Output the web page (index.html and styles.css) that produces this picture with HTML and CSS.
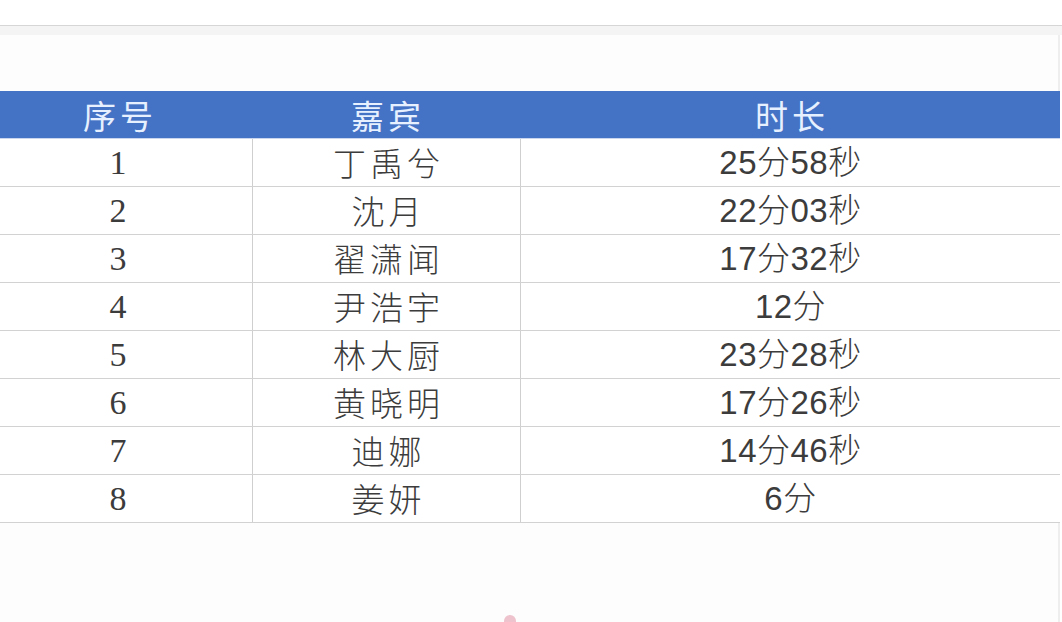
FILE: index.html
```html
<!DOCTYPE html>
<html lang="zh-CN">
<head>
<meta charset="utf-8">
<title>嘉宾时长</title>
<link rel="stylesheet" href="styles.css">
</head>
<body>
<div class="topbar"></div>
<div class="strip"></div>
<div class="sheet">
  <div class="table">
    <div class="row head">
      <div class="cell">序号</div>
      <div class="cell">嘉宾</div>
      <div class="cell">时长</div>
    </div>
    <div class="row"><div class="cell num">1</div><div class="cell">丁禹兮</div><div class="cell dur">25分58秒</div></div>
    <div class="row"><div class="cell num">2</div><div class="cell">沈月</div><div class="cell dur">22分03秒</div></div>
    <div class="row"><div class="cell num">3</div><div class="cell">翟潇闻</div><div class="cell dur">17分32秒</div></div>
    <div class="row"><div class="cell num">4</div><div class="cell">尹浩宇</div><div class="cell dur">12分</div></div>
    <div class="row"><div class="cell num">5</div><div class="cell">林大厨</div><div class="cell dur">23分28秒</div></div>
    <div class="row"><div class="cell num">6</div><div class="cell">黄晓明</div><div class="cell dur">17分26秒</div></div>
    <div class="row"><div class="cell num">7</div><div class="cell">迪娜</div><div class="cell dur">14分46秒</div></div>
    <div class="row"><div class="cell num">8</div><div class="cell">姜妍</div><div class="cell dur">6分</div></div>
  </div>
  <div class="bottom"><span class="blob"></span></div>
</div>
</body>
</html>
```
FILE: styles.css
```css
html, body {
  margin: 0;
  padding: 0;
  background: #ffffff;
  overflow: hidden;
}
body {
  width: 1062px;
  height: 622px;
  font-family: "Noto Sans CJK SC", sans-serif;
}
.topbar {
  height: 25px;
  background: #ffffff;
  border-bottom: 1px solid #d6d6d6;
}
.strip {
  height: 9px;
  background: #f4f4f4;
}
.sheet {
  background: #fdfdfd;
  padding-top: 56px;
  height: 587px;
  box-sizing: border-box;
  border-right: 2px solid #eeeeee;
  margin-right: 2px;
}
.table {
  margin-left: -16px;
  width: 1076px;
}
.row {
  display: grid;
  grid-template-columns: 268px 268px 540px;
  height: 48px;
  border-bottom: 1px solid #d2d2d2;
  box-sizing: border-box;
  background: #ffffff;
}
.row.head {
  height: 48px;
  background: #4472c4;
  border-bottom: 1px solid #c9d6ee;
}
.cell {
  display: flex;
  align-items: center;
  justify-content: center;
  font-size: 33px;
  font-weight: 300;
  line-height: 1;
  color: #3c3c3c;
  letter-spacing: 4px;
  padding-left: 4px;
}
.head .cell {
  color: #e6f0ff;
  font-weight: 400;
  letter-spacing: 4px;
  padding-top: 2px;
}
.cell + .cell {
  border-left: 1px solid #cfcfcf;
}
.head .cell + .cell {
  border-left: none;
}
.num {
  font-family: "Liberation Serif", serif;
  font-size: 34px;
  font-weight: 400;
  letter-spacing: 0;
  padding-left: 0;
}
.dur {
  font-family: "Liberation Sans", "Noto Sans CJK SC", sans-serif;
  letter-spacing: 0.5px;
  padding-left: 0;
}
.bottom {
  display: flex;
  padding-top: 92px;
  padding-left: 504px;
}
.blob {
  width: 12px;
  height: 8px;
  border-radius: 6px 6px 0 0;
  background: #e7a9b8;
  opacity: 0.7;
}
```
